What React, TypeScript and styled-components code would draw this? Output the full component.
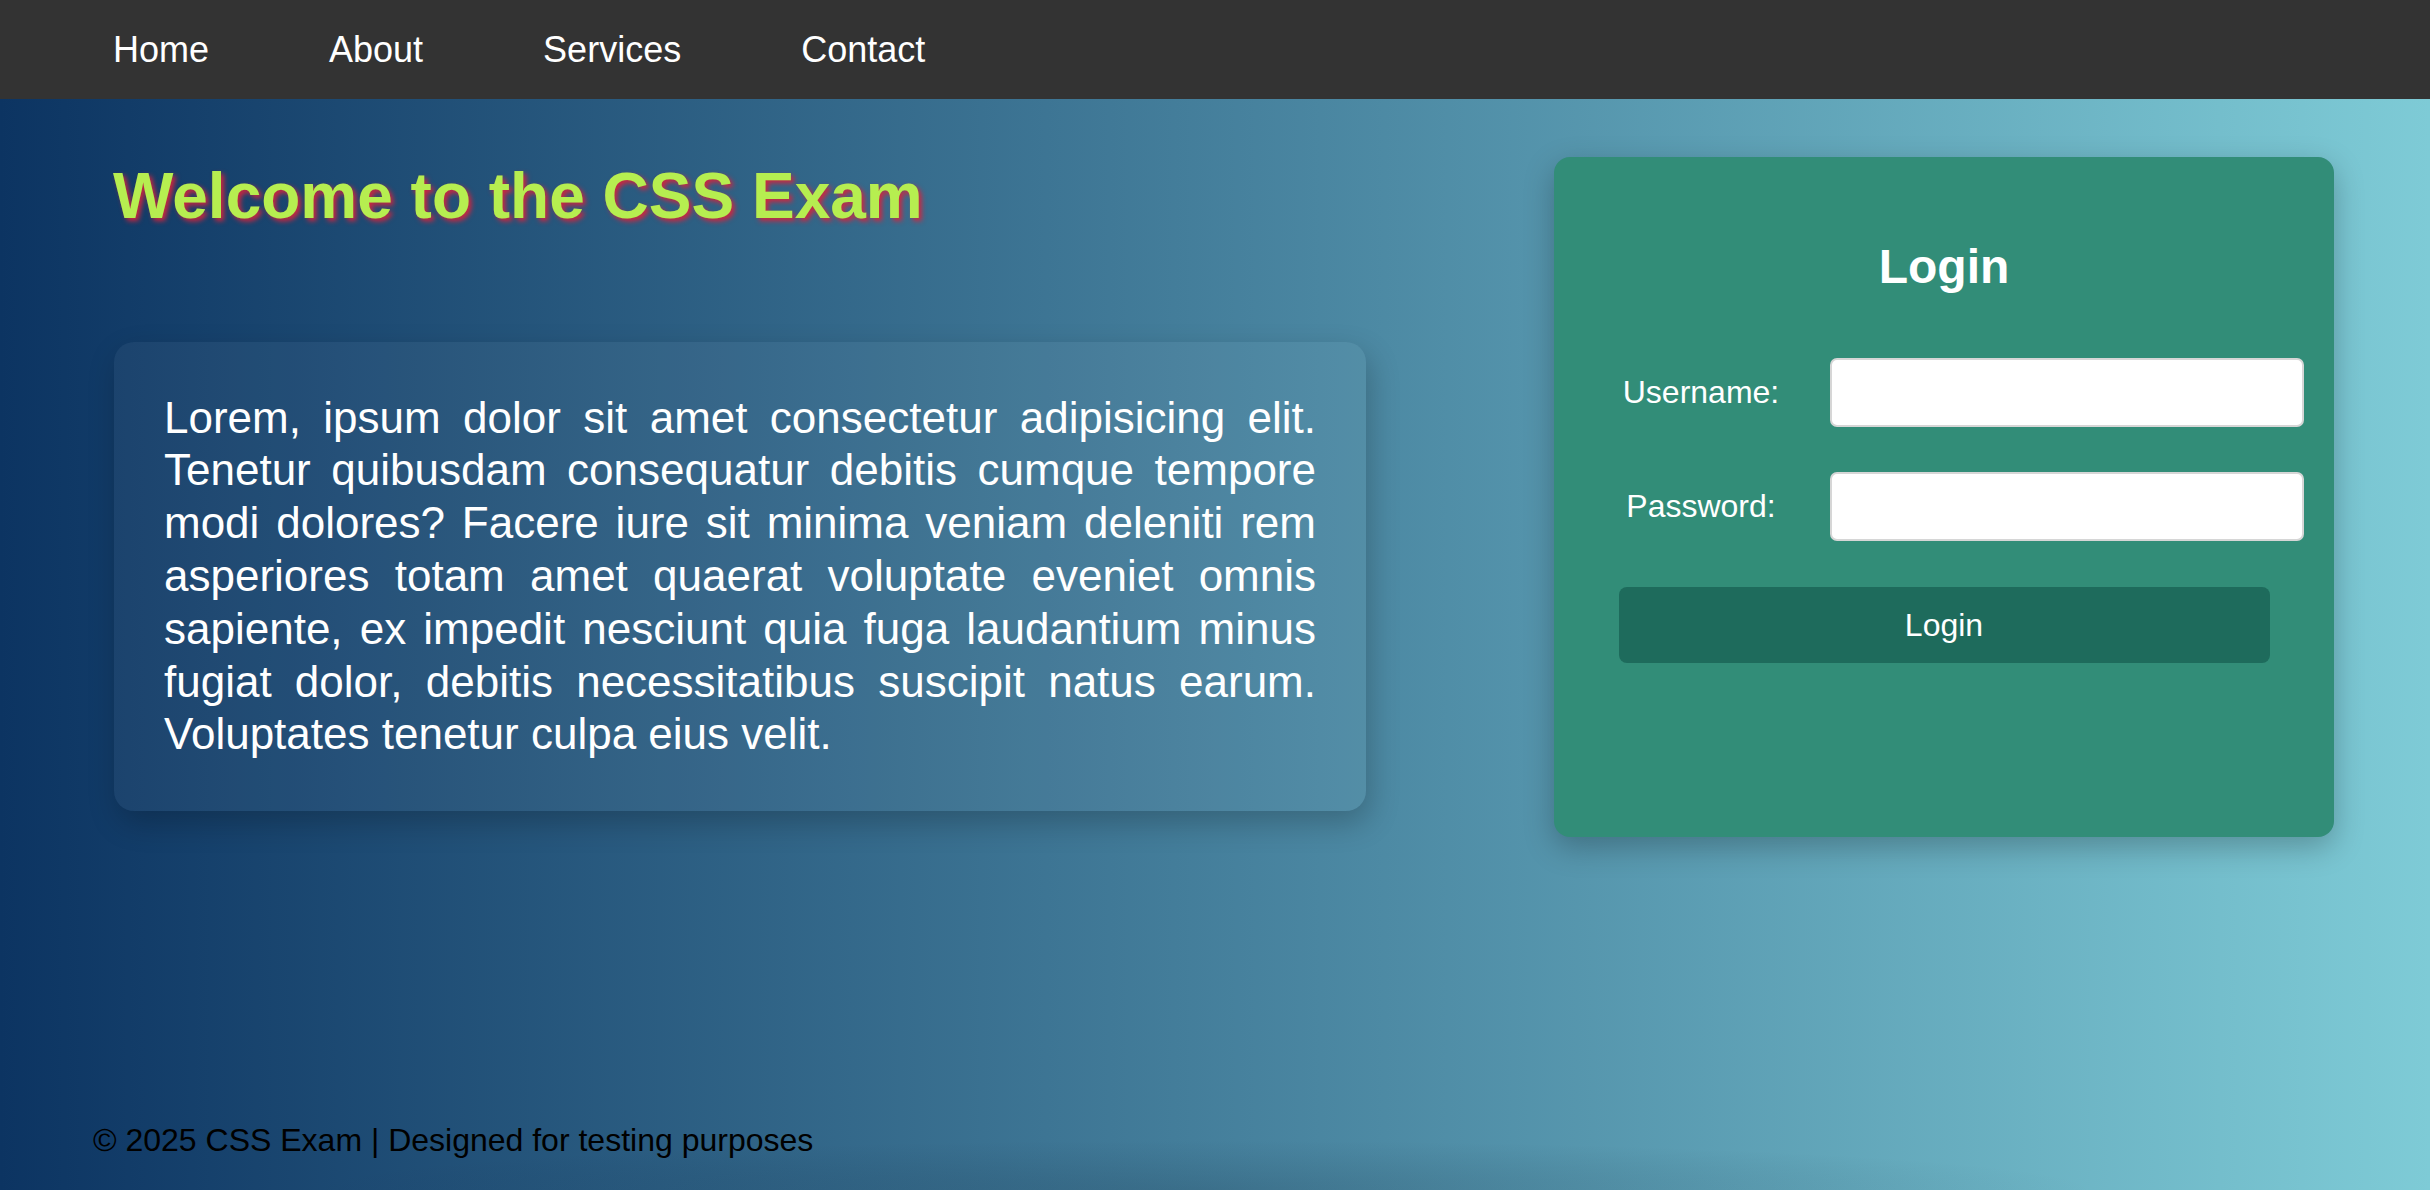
import React from "react";
import styled, { createGlobalStyle } from "styled-components";

const GlobalStyle = createGlobalStyle`
  html, body {
    margin: 0;
    padding: 0;
  }
  body {
    font-family: "Liberation Sans", Arial, Helvetica, sans-serif;
    background: #0c3462;
  }
  * { box-sizing: border-box; }
`;

const Page = styled.div`
  min-height: 100vh;
  display: flex;
  flex-direction: column;
  background:
    radial-gradient(ellipse 900px 50px at 1200px 100%, rgba(10, 30, 50, 0.16), rgba(10, 30, 50, 0) 100%),
    linear-gradient(to right, #0c3462 0%, #7ecbd6 100%);
`;

const NavBar = styled.nav`
  height: 99px;
  background: #333333;
  display: flex;
  align-items: center;
  padding-left: 113px;
  gap: 120px;
`;

const NavLink = styled.a`
  color: #ffffff;
  font-size: 36px;
  line-height: 1.15;
  text-decoration: none;
`;

const Main = styled.main`
  flex: 1;
  display: flex;
  justify-content: space-between;
  align-items: flex-start;
  padding: 58px 96px 0 113px;
`;

const LeftColumn = styled.section`
  width: 1253px;
  display: flex;
  flex-direction: column;
`;

const Title = styled.h1`
  margin: 3px 0 0;
  font-size: 64px;
  line-height: 1.15;
  font-weight: 700;
  color: #b6ee50;
  text-shadow: 3px 3px 5px rgba(214, 36, 60, 0.95);
`;

const TextCard = styled.div`
  margin-top: 108px;
  margin-left: 1px;
  padding: 50px 50px;
  border-radius: 20px;
  background: rgba(255, 255, 255, 0.045);
  box-shadow: 4px 12px 30px rgba(0, 0, 0, 0.22);
  color: #ffffff;
  font-size: 44px;
  line-height: 1.2;
  text-align: justify;
`;

const LoginCard = styled.aside`
  width: 780px;
  min-height: 680px;
  background: #328d78;
  border-radius: 16px;
  box-shadow: 0 10px 30px rgba(0, 0, 0, 0.25);
  padding: 42px 30px 40px;
  display: flex;
  flex-direction: column;
`;

const LoginTitle = styled.h2`
  margin: 40px 0 64px;
  text-align: center;
  color: #ffffff;
  font-size: 48px;
  line-height: 1.15;
  font-weight: 700;
`;

const FormRow = styled.div<{ $top: number }>`
  display: flex;
  align-items: center;
  gap: 12px;
  margin-top: ${(p) => p.$top}px;
`;

const Label = styled.label`
  flex: 0 0 234px;
  text-align: center;
  color: #ffffff;
  font-size: 32px;
  line-height: 1.15;
`;

const Input = styled.input`
  flex: 1;
  height: 69px;
  border: 2px solid #d6d6d6;
  border-radius: 7px;
  background: #ffffff;
  font-size: 30px;
  padding: 0 14px;
  outline: none;
`;

const SubmitButton = styled.button`
  align-self: center;
  width: 651px;
  height: 76px;
  margin-top: 46px;
  border: none;
  border-radius: 8px;
  background: #1e6b5c;
  color: #ffffff;
  font-family: "Liberation Sans", Arial, Helvetica, sans-serif;
  font-size: 32px;
  cursor: pointer;
`;

const Footer = styled.footer`
  padding: 0 0 31px 93px;
  color: #000000;
  font-size: 32px;
  line-height: 1.15;
`;

const navItems = ["Home", "About", "Services", "Contact"];

export default function App() {
  return (
    <>
      <GlobalStyle />
      <Page>
        <NavBar>
          {navItems.map((item) => (
            <NavLink key={item} href="#">
              {item}
            </NavLink>
          ))}
        </NavBar>
        <Main>
          <LeftColumn>
            <Title>Welcome to the CSS Exam</Title>
            <TextCard>
              Lorem, ipsum dolor sit amet consectetur adipisicing elit. Tenetur
              quibusdam consequatur debitis cumque tempore modi dolores? Facere
              iure sit minima veniam deleniti rem asperiores totam amet quaerat
              voluptate eveniet omnis sapiente, ex impedit nesciunt quia fuga
              laudantium minus fugiat dolor, debitis necessitatibus suscipit
              natus earum. Voluptates tenetur culpa eius velit.
            </TextCard>
          </LeftColumn>
          <LoginCard>
            <LoginTitle>Login</LoginTitle>
            <FormRow $top={0}>
              <Label htmlFor="username">Username:</Label>
              <Input id="username" type="text" />
            </FormRow>
            <FormRow $top={45}>
              <Label htmlFor="password">Password:</Label>
              <Input id="password" type="password" />
            </FormRow>
            <SubmitButton type="button">Login</SubmitButton>
          </LoginCard>
        </Main>
        <Footer>© 2025 CSS Exam | Designed for testing purposes</Footer>
      </Page>
    </>
  );
}
